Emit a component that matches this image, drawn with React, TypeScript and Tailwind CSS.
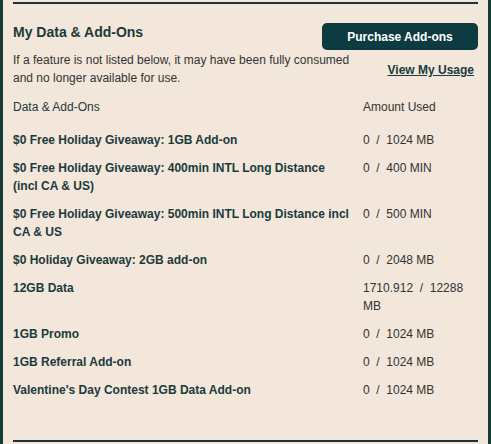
import React from 'react';

const rows: { name: string; amount: string }[] = [
  { name: '$0 Free Holiday Giveaway: 1GB Add-on', amount: '0\u00a0 /\u00a0 1024 MB' },
  { name: '$0 Free Holiday Giveaway: 400min INTL Long Distance (incl CA & US)', amount: '0\u00a0 /\u00a0 400 MIN' },
  { name: '$0 Free Holiday Giveaway: 500min INTL Long Distance incl CA & US', amount: '0\u00a0 /\u00a0 500 MIN' },
  { name: '$0 Holiday Giveaway: 2GB add-on', amount: '0\u00a0 /\u00a0 2048 MB' },
  { name: '12GB Data', amount: '1710.912\u00a0 /\u00a0 12288 MB' },
  { name: '1GB Promo', amount: '0\u00a0 /\u00a0 1024 MB' },
  { name: '1GB Referral Add-on', amount: '0\u00a0 /\u00a0 1024 MB' },
  { name: "Valentine's Day Contest 1GB Data Add-on", amount: '0\u00a0 /\u00a0 1024 MB' },
];

const App: React.FC = () => {
  return (
    <div
      className="w-[491px] h-[444px] overflow-hidden bg-[#f2e7da] border-l-[3px] border-r-[3px] border-[#173a36]"
      style={{ fontFamily: '"Liberation Sans", Arial, sans-serif' }}
    >
      <div className="mx-[10px]">
        {/* top rule */}
        <div className="mt-[2px] h-[2px] bg-[#1c3535]" />

        {/* Header */}
        <div className="flex items-start justify-between pt-[18px]">
          <h2 className="text-[14px] leading-[20px] font-bold text-[#1b3a3c]">My Data &amp; Add-Ons</h2>
          <button
            type="button"
            className="mt-px w-[156px] h-[27px] rounded-[5px] bg-[#0e3b41] text-white text-[12px] font-bold"
          >
            Purchase Add-ons
          </button>
        </div>
        <div className="mt-px flex items-center justify-between">
          <p className="w-[345px] text-[12px] leading-[18px] text-[#333]">
            If a feature is not listed below, it may have been fully consumed and no longer available for use.
          </p>
          <a href="#" className="mt-[2px] mr-[4px] text-[12px] leading-[18px] font-bold underline text-[#1b3a3c]">
            View My Usage
          </a>
        </div>

        {/* Table */}
        <div className="mt-[11px] grid grid-cols-[337px_1fr] gap-x-[13px] text-[12px] leading-[18px]">
          <div className="text-[#1b3a3c]">Data &amp; Add-Ons</div>
          <div className="text-[#333]">Amount Used</div>
          {rows.map((r, i) => (
            <React.Fragment key={i}>
              <div className={`${i === 0 ? 'mt-[15px]' : 'mt-[10px]'} font-bold text-[#1b3a3c]`}>{r.name}</div>
              <div className={`${i === 0 ? 'mt-[15px]' : 'mt-[10px]'} text-[#333] pr-[8px]`}>{r.amount}</div>
            </React.Fragment>
          ))}
        </div>

        {/* bottom rule */}
        <div className="mt-[41px] h-[2px] bg-[#1c3535]" />
      </div>
    </div>
  );
};

export default App;
